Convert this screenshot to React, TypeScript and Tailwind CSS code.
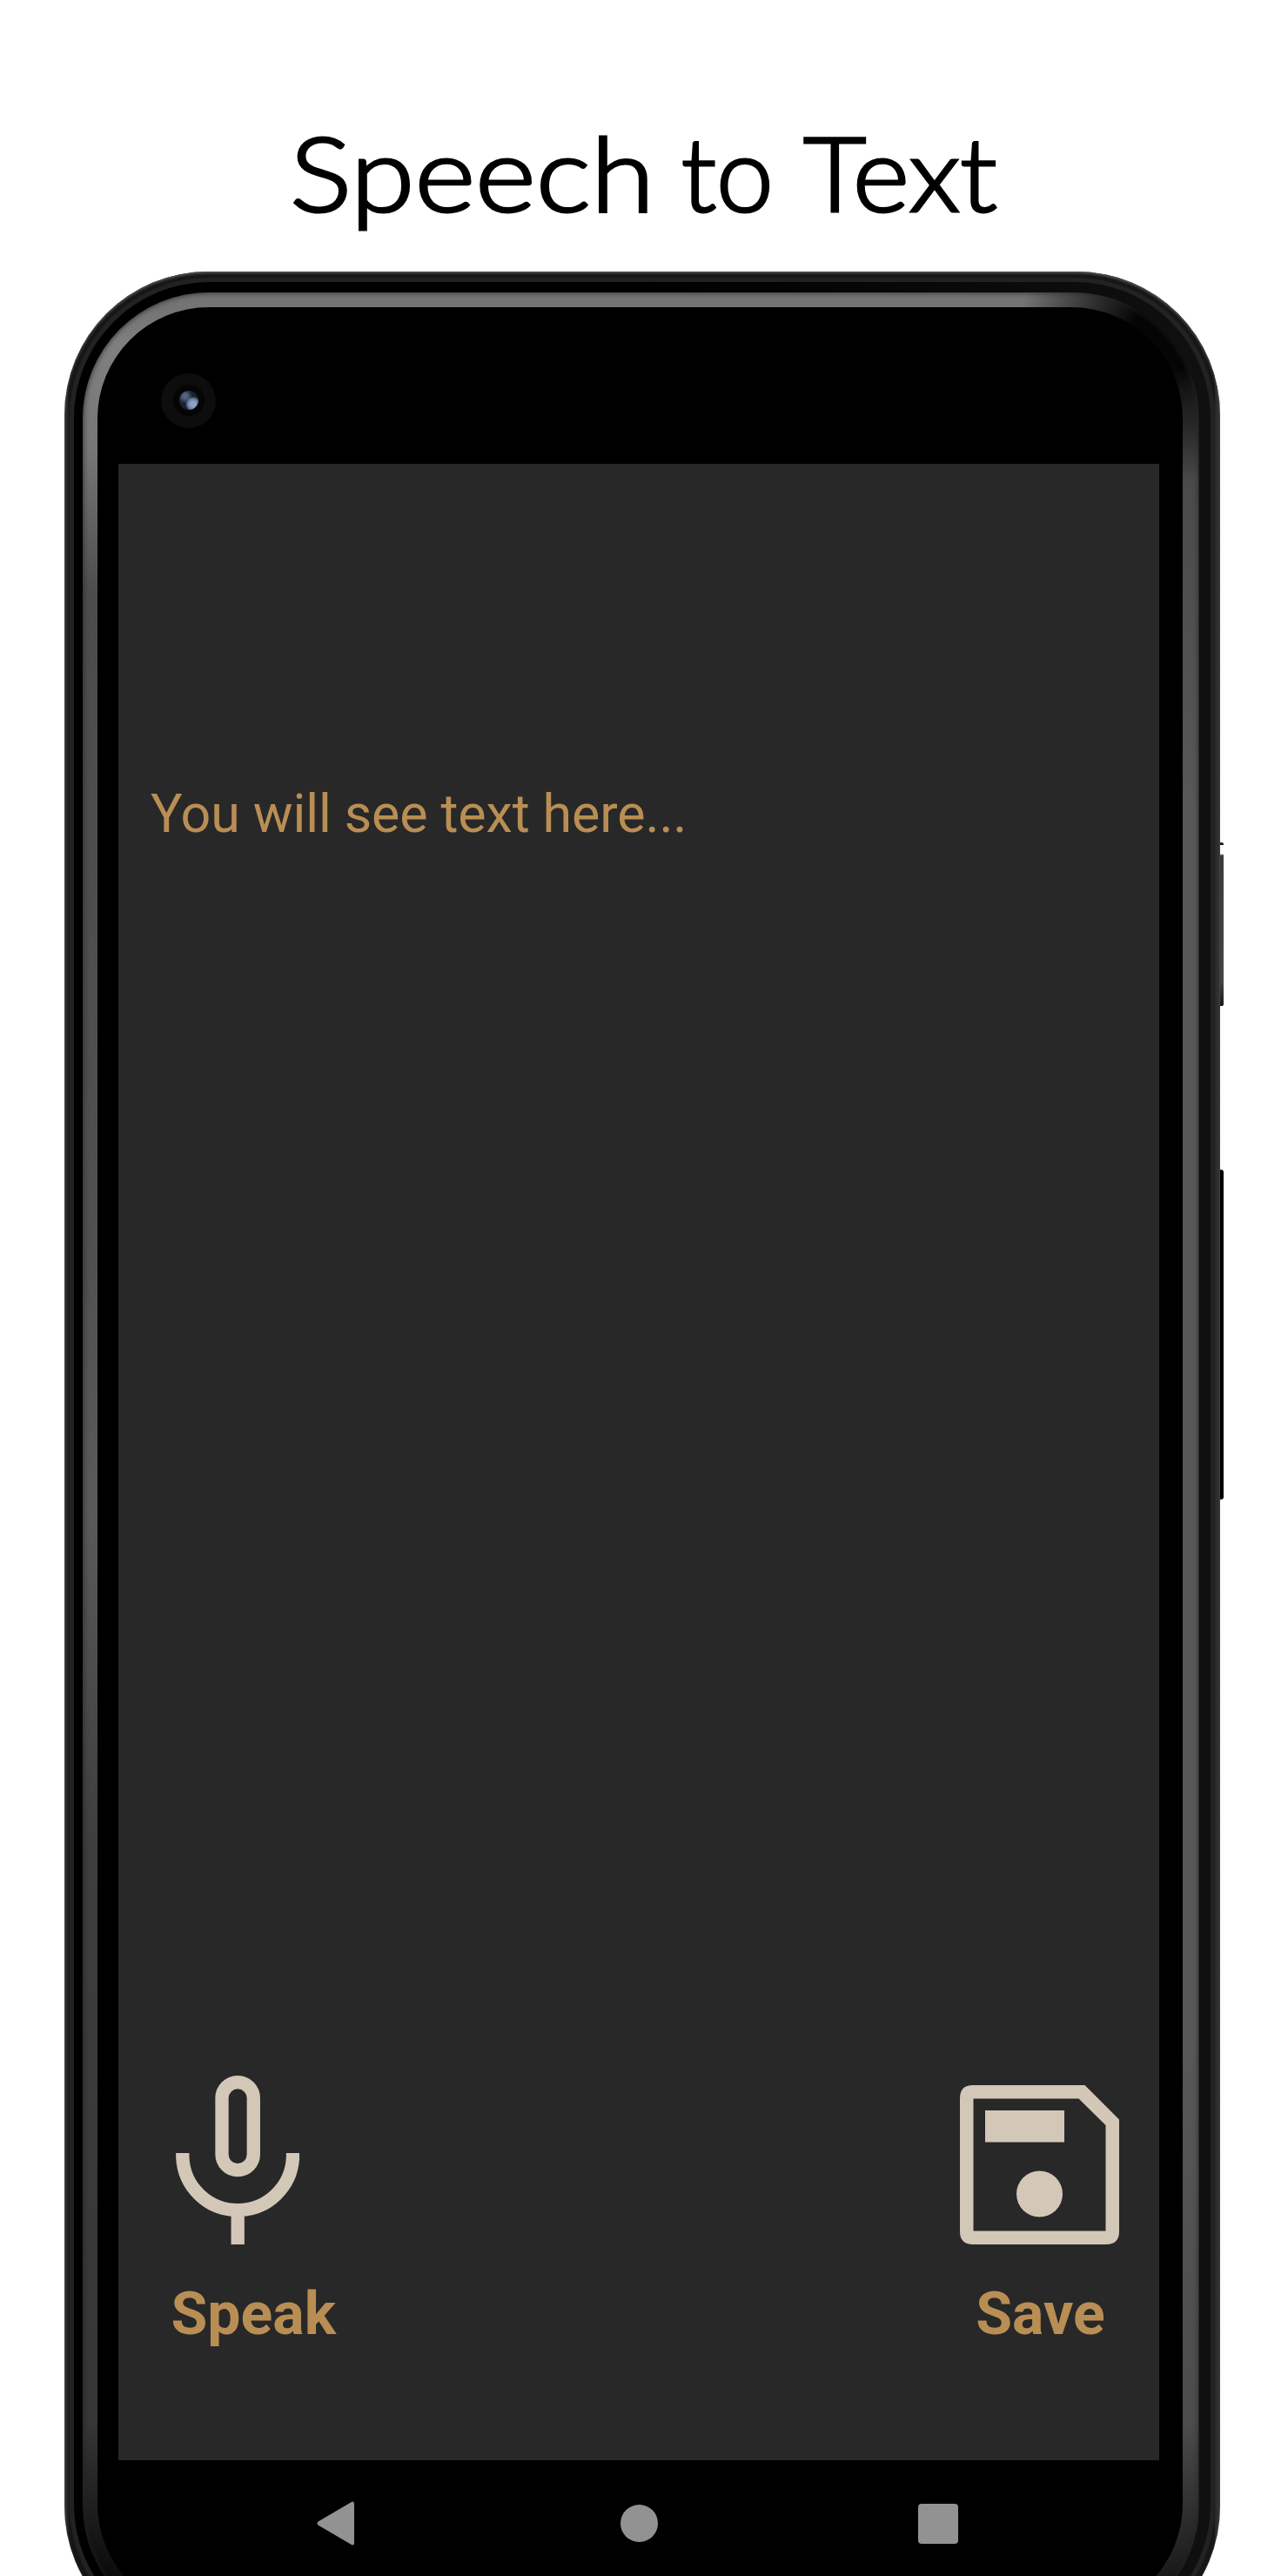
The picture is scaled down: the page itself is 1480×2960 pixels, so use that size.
import React from "react";

function MicIcon() {
  return (
    <svg className="block h-[194px] w-[142px]" viewBox="0 0 142 194" fill="none" stroke="#d3c7b7" strokeWidth="15.3">
      <rect x="53" y="7.7" width="36.3" height="101" rx="18.1" />
      <path d="M7.8 89V93.7A63.4 63.4 0 0 0 134.5 93.7V89M71.2 154V194" />
    </svg>
  );
}

function SaveIcon() {
  return (
    <svg className="block h-[183px] w-[183px]" viewBox="0 0 183 183" fill="#d3c7b7">
      <path fillRule="evenodd" d="M15 0H143.5L183 39.5V168Q183 183 168 183H15Q0 183 0 168V15Q0 0 15 0ZM15.5 15.5V167.5H167.5V46L136.5 15.5Z" />
      <rect x="29" y="29" width="91" height="36.5" />
      <circle cx="91.5" cy="125" r="26.5" />
    </svg>
  );
}

function NavBar() {
  return (
    <div className="flex h-[146px] w-full pt-[45px]">
      <svg className="ml-[228px] block h-[56px] w-[44px]" viewBox="0 0 44 56" fill="#929292">
        <path d="M1.5 25.5L39 3.5Q43 1 43 5.500V49.500Q43 54 39 51.500L1.500 29.500Q-.5 27.500 1.500 25.500Z" />
      </svg>
      <div className="mt-[6px] ml-[305px] size-[43px] rounded-full bg-[#929292]" />
      <div className="mt-[5px] ml-[299px] size-[46px] rounded-[4px] bg-[#929292]" />
    </div>
  );
}

function Screen() {
  return (
    <div className="flex h-[2294px] w-[1195.500px] flex-col bg-[#282828] font-[Roboto,sans-serif] text-[#b98e54]">
      <p className="mt-[366px] ml-[37px] text-[61px] leading-[73px] tracking-[-0.120px] whitespace-nowrap">You will see text here...</p>
      <div className="mt-auto mb-[128px] flex items-end justify-between pr-[46px] pl-[60.500px]">
        <div className="flex flex-col">
          <div className="ml-[5.500px]"><MicIcon /></div>
          <span className="mt-[40px] text-[68px] leading-[80px] font-bold">Speak</span>
        </div>
        <div className="flex flex-col items-center">
          <SaveIcon />
          <span className="mt-[40px] ml-[3px] text-[68px] leading-[80px] font-bold">Save</span>
        </div>
      </div>
    </div>
  );
}

function Camera() {
  return (
    <div className="flex size-[63px] items-center justify-center rounded-full bg-[#0d0d0d]">
      <div className="flex size-[36px] items-center justify-center rounded-full bg-[#050505]">
        <div className="size-[22px] rounded-full bg-[radial-gradient(circle_at_72%_70%,#8fa3c4_0_12%,#6b7d9e_28%,transparent_40%),radial-gradient(circle_at_30%_28%,#55637f_0_12%,transparent_38%)] bg-[#1a2030]" />
      </div>
    </div>
  );
}

export default function App() {
  return (
    <main className="h-[2960px] w-[1480px] overflow-hidden bg-white">
      <header className="flex h-[312px] justify-center pt-[127px]">
        <h1 className="flex pr-[14px] font-[Lato,sans-serif] text-[118px] leading-[142px] font-light whitespace-pre text-black [-webkit-text-stroke:3px_black]">
          <span className="inline-block w-[416px] origin-left scale-x-[1.132]">Speech </span>
          <span className="ml-[34px] inline-block">to </span>
          <span className="ml-[2px] inline-block origin-left scale-x-[1.06]">Text</span>
        </h1>
      </header>
      <div className="relative ml-[74px] h-[2733px] w-[1332px]">
        <div className="absolute top-[656px] right-0 h-[188px] w-[8px] rounded-r-[2px] border-t-[3px] border-[#222] bg-[linear-gradient(#fff_0_10px,#3b3b3b_12px,#444_85%,#191919)]" />
        <div className="absolute top-[1032px] right-0 h-[379px] w-[8px] rounded-r-[3px] bg-black" />
        <div className="relative h-full w-[1327.500px] rounded-[165px] bg-[linear-gradient(90deg,#383838,#262626_3px,#161616_6px,#161616_1321px,#2b2d2d_1323px,#303232)] p-[6px] pt-[7px] shadow-[inset_0_2px_3px_#555]">
          <div className="h-full w-full rounded-[160px] bg-[#222] p-[5px]">
            <div className="h-full w-full rounded-[156px] bg-[linear-gradient(90deg,#000_50%,#101010)] pt-[12px] pr-[13px] pb-[10px] pl-[10px]">
              <div className="h-full w-full rounded-[145px] bg-[radial-gradient(circle_at_1245px_50px,#050505_40px,transparent_170px),linear-gradient(#747474_0_20px,#808080_60px,#777_180px,#4c4c4c_350px,#505050_1100px,#5a5a5a_1400px,#3e3e3e_1780px,#363636_2450px,#0c0c0c_2620px),linear-gradient(#747474_0_20px,#484848_150px,#585858_600px,#585858_2000px,#4c4c4c_2450px,#151515_2640px)] bg-[size:100%_100%,50%_100%,50%_100%] bg-[position:0_0,0_0,100%_0] bg-no-repeat shadow-[inset_0_0_6px_#222]" />
            </div>
          </div>
          <div className="absolute top-[41px] right-[42.500px] bottom-[40px] left-[38px] flex flex-col rounded-[128px] bg-black">
            <div className="flex h-[180px] items-center pt-[34px] pl-[73px]"><Camera /></div>
            <div className="pl-[24px]"><Screen /><NavBar /></div>
          </div>
        </div>
      </div>
    </main>
  );
}
